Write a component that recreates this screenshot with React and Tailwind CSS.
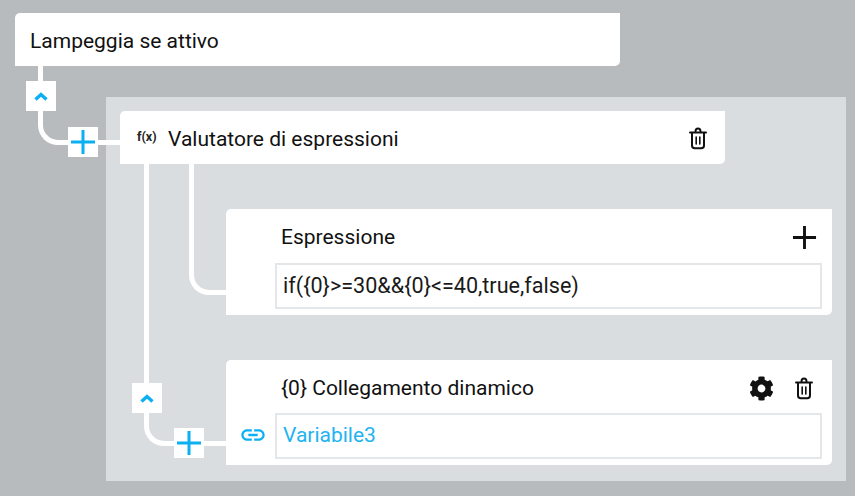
import React from 'react';
import { FaCog } from 'react-icons/fa';
import { MdLink } from 'react-icons/md';

const TrashIcon = () => (
    <svg width="18" height="24" viewBox="0 0 18 24" fill="none" stroke="#111" strokeWidth="2" strokeLinecap="round">
        <path d="M1 6.500h16" />
        <path d="M6.500 5.500c0-2 .8-3 2.500-3s2.500 1 2.500 3" />
        <path d="M3 7v12.500c0 1.800 1 2.800 2.800 2.800h6.400c1.800 0 2.800-1 2.800-2.800V7" />
        <path d="M7.200 11v7M10.800 11v7" strokeWidth="1.600" />
    </svg>
);

const PlusIcon = ({ size = 26, color = '#0cb0f2', weight = 3 }) => (
    <svg width={size} height={size} viewBox="0 0 26 26" stroke={color} strokeWidth={weight}>
        <path d="M13 1v24M1 13h24" />
    </svg>
);

const ChevronBox = ({ className }) => (
    <div className={`absolute w-[30px] h-[30px] bg-white flex items-center justify-center ${className}`}>
        <svg width="14" height="9" viewBox="0 0 14 9" fill="none" stroke="#0cb0f2" strokeWidth="3.400">
            <path d="M1.500 7.500L7 2.500l5.500 5" />
        </svg>
    </div>
);

const PlusBox = ({ className }) => (
    <div className={`absolute w-[30px] h-[30px] bg-white flex items-center justify-center ${className}`}>
        <PlusIcon />
    </div>
);

const ValueField = ({ children, color = 'text-[#1a1a1a]', size = 'text-[21px]' }) => (
    <div className={`h-[46px] w-[547px] border-2 border-[#e3e7ea] bg-white pl-[6px] flex items-center ${size} ${color}`}>
        {children}
    </div>
);

const App = () => {
    return (
        <div className="relative w-[855px] h-[496px] overflow-hidden bg-[#b8bbbd] pt-[13px] font-['Roboto',sans-serif] text-[#111]">
            {/* titolo */}
            <div className="ml-[15px] w-[605px] h-[53px] bg-white rounded-tl-[5px] rounded-br-[5px] pl-[15px] pt-[5px] flex items-center text-[21px]">
                Lampeggia se attivo
            </div>

            {/* pannello */}
            <div className="ml-[106px] mt-[31px] w-[740px] h-[384px] bg-[#dadde0] pt-[14px] pl-[14px]">
                <div className="w-[605px] h-[53px] bg-white rounded-tl-[5px] rounded-br-[5px] flex items-center pl-[17px] pr-[18px]">
                    <span className="w-[31px] text-[12.500px] font-bold text-[#222]">f(x)</span>
                    <span className="pt-[5px] text-[21px]">Valutatore di espressioni</span>
                    <span className="ml-auto flex"><TrashIcon /></span>
                </div>

                <div className="ml-[106px] mt-[45px] w-[606px] h-[106px] bg-white rounded-tl-[5px] rounded-br-[5px] pl-[49px] pt-[14px]">
                    <div className="flex items-center h-[28px] pr-[15px] justify-between pl-[6px] text-[21px]">
                        <span className="pt-[2px]">Espressione</span>
                        <PlusIcon color="#111" size={25} />
                    </div>
                    <div className="mt-[12px]">
                        <ValueField size="text-[21.6px]">if({'{0}'}&gt;=30&amp;&amp;{'{0}'}&lt;=40,true,false)</ValueField>
                    </div>
                </div>

                <div className="relative ml-[106px] mt-[45px] w-[606px] h-[105px] bg-white rounded-tl-[5px] rounded-br-[5px] pl-[49px] pt-[14px]">
                    <div className="flex items-center h-[28px] pr-[19px] pl-[6px] text-[21px]">
                        <span className="pt-[2px]">{'{0}'} Collegamento dinamico</span>
                        <span className="ml-auto flex items-center gap-[21px]">
                            <FaCog size={25} color="#111" />
                            <TrashIcon />
                        </span>
                    </div>
                    <div className="mt-[11px]">
                        <ValueField color="text-[#22b4f2]">Variabile3</ValueField>
                    </div>
                    <MdLink size={28} color="#0cb0f2" className="absolute left-[13px] top-[61px]" />
                </div>
            </div>

            {/* connettori */}
            <div className="absolute left-[38px] top-[66px] w-[82px] h-[79px] border-l-[5px] border-b-[5px] border-white rounded-bl-[20px]" />
            <div className="absolute left-[144px] top-[164px] w-[82px] h-[282px] border-l-[5px] border-b-[5px] border-white rounded-bl-[20px]" />
            <div className="absolute left-[189px] top-[164px] w-[37px] h-[131px] border-l-[5px] border-b-[5px] border-white rounded-bl-[20px]" />

            <ChevronBox className="left-[26px] top-[81px]" />
            <PlusBox className="left-[68px] top-[127px]" />
            <ChevronBox className="left-[132px] top-[383px]" />
            <PlusBox className="left-[174px] top-[428px]" />
        </div>
    );
};

export default App;
